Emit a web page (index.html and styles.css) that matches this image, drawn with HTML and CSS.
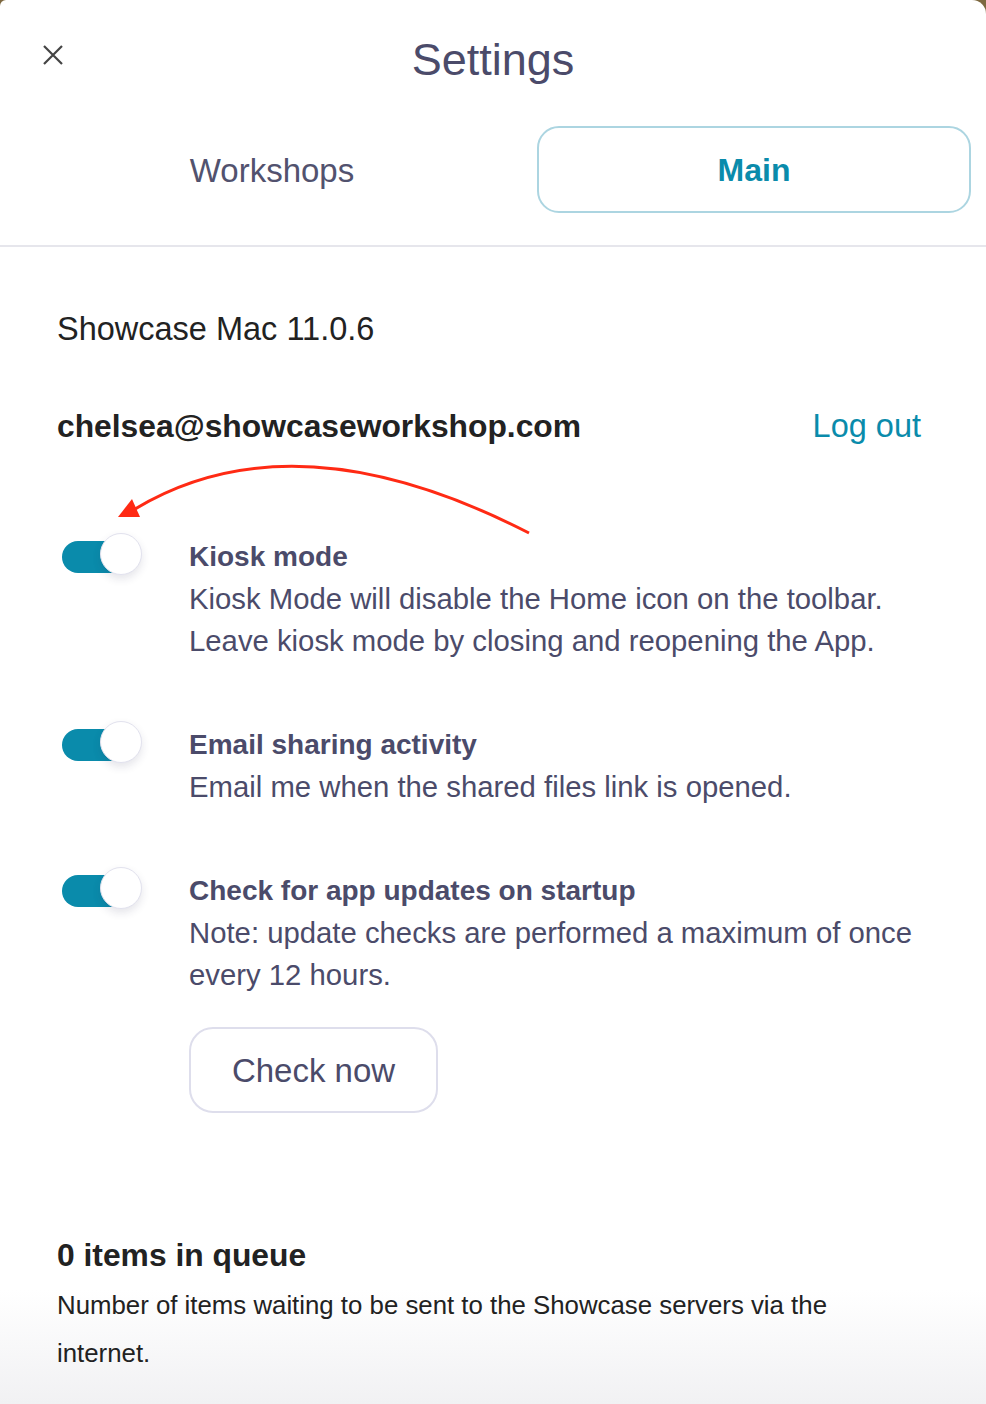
FILE: index.html
```html
<!DOCTYPE html>
<html lang="en">
<head>
    <meta charset="UTF-8">
    <meta name="viewport" content="width=device-width, initial-scale=1.0">
    <title>Settings</title>
    <link rel="stylesheet" href="styles.css">
</head>
<body>
    <div class="panel">
        <!-- Header -->
        <header class="header">
            <div class="topbar">
                <button class="close" aria-label="Close">
                    <svg width="22" height="22" viewBox="0 0 22 22">
                        <path d="M2 2 L20 20 M20 2 L2 20" stroke="#444" stroke-width="2.2" fill="none"/>
                    </svg>
                </button>
                <h1 class="title">Settings</h1>
                <span></span>
            </div>
            <nav class="tabs">
                <button class="tab">Workshops</button>
                <button class="tab active">Main</button>
            </nav>
        </header>

        <!-- Main settings -->
        <main class="content">
            <p class="version">Showcase Mac 11.0.6</p>

            <div class="account">
                <span class="email">chelsea@showcaseworkshop.com</span>
                <a class="logout" href="#">Log out</a>
            </div>

            <div class="setting">
                <div class="toggle on"><span class="knob"></span></div>
                <div class="setting-text">
                    <div class="setting-title">Kiosk mode</div>
                    <div class="setting-desc">Kiosk Mode will disable the Home icon on the toolbar. Leave kiosk mode by closing and reopening the App.</div>
                </div>
            </div>

            <div class="setting">
                <div class="toggle on"><span class="knob"></span></div>
                <div class="setting-text">
                    <div class="setting-title">Email sharing activity</div>
                    <div class="setting-desc">Email me when the shared files link is opened.</div>
                </div>
            </div>

            <div class="setting">
                <div class="toggle on"><span class="knob"></span></div>
                <div class="setting-text">
                    <div class="setting-title">Check for app updates on startup</div>
                    <div class="setting-desc">Note: update checks are performed a maximum of once every 12 hours.</div>
                    <button class="check-btn">Check now</button>
                </div>
            </div>

            <section class="queue">
                <h2>0 items in queue</h2>
                <p>Number of items waiting to be sent to the Showcase servers via the internet.</p>
            </section>
        </main>

        <!-- annotation arrow -->
        <svg class="annotation" width="986" height="1404" viewBox="0 0 986 1404">
            <path d="M529 533 Q 295 413 135 509" stroke="#ff2a14" stroke-width="3" fill="none"/>
            <polygon points="118,517 132,499 140,517" fill="#ff2a14"/>
        </svg>
    </div>
</body>
</html>
```

FILE: styles.css
```css
* {
    box-sizing: border-box;
}

body {
    margin: 0;
    background-color: #7d6840;
    font-family: 'Liberation Sans', Arial, sans-serif;
}

.panel {
    position: relative;
    width: 986px;
    height: 1404px;
    background: linear-gradient(#fff 0, #fff 1290px, #f1f1f3 1404px);
    border-radius: 6px 14px 0 0;
    overflow: hidden;
}

/* Header */
.header {
    border-bottom: 2px solid #e6e6ec;
    padding-bottom: 32px;
}

.topbar {
    display: grid;
    grid-template-columns: 1fr auto 1fr;
    align-items: center;
    padding: 30px 0 0 0;
    height: 126px;
    align-content: start;
}

.close {
    justify-self: start;
    margin-left: 42px;
    margin-top: -10px;
    background: none;
    border: none;
    padding: 0;
    width: 22px;
    height: 22px;
    cursor: pointer;
}

.title {
    margin: 0;
    font-size: 45px;
    font-weight: normal;
    color: #4b4b6a;
    line-height: 60px;
}

.tabs {
    display: grid;
    grid-template-columns: 1fr 1fr;
    gap: 48px;
    padding: 0 15px 0 55px;
}

.tab {
    height: 87px;
    background: none;
    border: 2px solid transparent;
    border-radius: 22px;
    font-family: inherit;
    font-size: 33px;
    color: #52526e;
    cursor: pointer;
    padding-top: 3px;
}

.tab.active {
    border-color: #acd5e1;
    color: #0a8bab;
    font-weight: bold;
    font-size: 32px;
}

/* Content */
.content {
    padding: 61px 40px 0 57px;
}

.version {
    margin: 0;
    font-size: 32.5px;
    line-height: 42px;
    color: #222;
}

.account {
    display: flex;
    justify-content: space-between;
    align-items: baseline;
    margin-top: 55px;
    margin-right: 25px;
    line-height: 42px;
}

.email {
    font-size: 31.8px;
    font-weight: bold;
    color: #222;
}

.logout {
    font-size: 32.5px;
    color: #0a8bab;
    text-decoration: none;
}

.setting {
    display: grid;
    grid-template-columns: 132px 1fr;
    margin-top: 62px;
}

.account + .setting {
    margin-top: 89px;
}

.setting-title {
    font-size: 28px;
    font-weight: bold;
    line-height: 42px;
    color: #4b4b6a;
}

.setting-desc {
    font-size: 29.3px;
    line-height: 42px;
    color: #4b4b6a;
}

.toggle {
    position: relative;
    margin: 5px 0 0 5px;
    width: 70px;
    height: 32px;
    border-radius: 16px;
    background-color: #0a8bab;
}

.toggle .knob {
    position: absolute;
    top: -8px;
    left: 38px;
    width: 42px;
    height: 42px;
    border-radius: 50%;
    background-color: #fff;
    border: 1px solid #e2e2ee;
    box-shadow: 0 4px 8px rgba(40, 40, 80, 0.12);
}

.check-btn {
    margin-top: 31px;
    width: 249px;
    height: 86px;
    background: #fff;
    border: 2px solid #dedeec;
    border-radius: 24px;
    font-family: inherit;
    font-size: 33px;
    color: #4b4b6a;
    cursor: pointer;
    padding-top: 3px;
}

.queue {
    margin-top: 121px;
}

.queue h2 {
    margin: 0;
    font-size: 31.8px;
    line-height: 42px;
    color: #222;
}

.queue p {
    margin: 5px 0 0 0;
    font-size: 25.8px;
    line-height: 48px;
    color: #222;
    padding-right: 85px;
}

.annotation {
    position: absolute;
    top: 0;
    left: 0;
    pointer-events: none;
}
```
